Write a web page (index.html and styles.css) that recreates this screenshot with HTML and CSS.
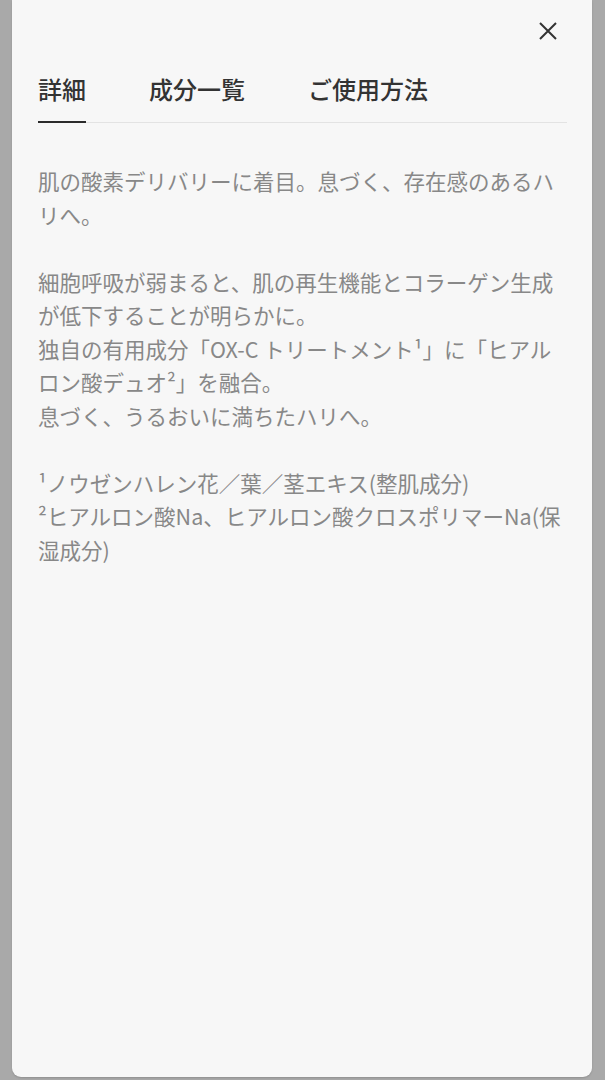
FILE: index.html
```html
<!DOCTYPE html>
<html lang="ja">
<head>
<meta charset="utf-8">
<title>詳細</title>
<link rel="stylesheet" href="styles.css">
</head>
<body>
<div class="panel">
  <div class="top">
    <button class="close" aria-label="閉じる">
      <svg width="20" height="20" viewBox="0 0 20 20"><path d="M2 2 L18 18 M18 2 L2 18" stroke="#333" stroke-width="2" stroke-linecap="butt" fill="none"/></svg>
    </button>
  </div>
  <div class="tabs">
    <div class="tab active">詳細</div>
    <div class="tab">成分一覧</div>
    <div class="tab">ご使用方法</div>
  </div>
  <div class="content">
    <p>肌の酸素デリバリーに着目。息づく、存在感のあるハリへ。<br><br>細胞呼吸が弱まると、肌の再生機能とコラーゲン生成が低下することが明らかに。<br>独自の有用成分「OX-C トリートメント¹」に「ヒアルロン酸デュオ²」を融合。<br>息づく、うるおいに満ちたハリへ。<br><br>¹ノウゼンハレン花／葉／茎エキス(整肌成分)<br>²ヒアルロン酸Na、ヒアルロン酸クロスポリマーNa(保湿成分)</p>
  </div>
</div>
</body>
</html>
```

FILE: styles.css
```css
html, body {
  margin: 0;
  padding: 0;
}
body {
  background: #a9a9a9;
  font-family: "Noto Sans CJK JP", "Noto Sans", sans-serif;
  width: 605px;
  height: 1080px;
  overflow: hidden;
}
.panel {
  margin: 0 13px 0 12px;
  height: 1077px;
  background: #f7f7f7;
  border-radius: 0 0 9px 9px;
  padding: 0 25px 0 26px;
  box-sizing: border-box;
  box-shadow: 0 1px 2px rgba(0,0,0,0.15);
}
.top {
  height: 62px;
  display: flex;
  justify-content: flex-end;
  align-items: center;
}
.close {
  background: none;
  border: 0;
  padding: 0;
  margin-right: 9px;
  width: 20px;
  height: 20px;
  display: flex;
}
.tabs {
  display: flex;
  gap: 63px;
  border-bottom: 1px solid #e3e3e3;
}
.tab {
  font-size: 24px;
  line-height: 34px;
  font-weight: 500;
  color: #333;
  padding: 10px 0 15px;
  border-bottom: 2px solid transparent;
  margin-bottom: -1px;
}
.tab.active {
  border-bottom-color: #2b2b2b;
}
.content {
  padding-top: 41px;
}
.content p {
  margin: 0;
  font-size: 21.5px;
  line-height: 33.5px;
  color: #888;
}
```
